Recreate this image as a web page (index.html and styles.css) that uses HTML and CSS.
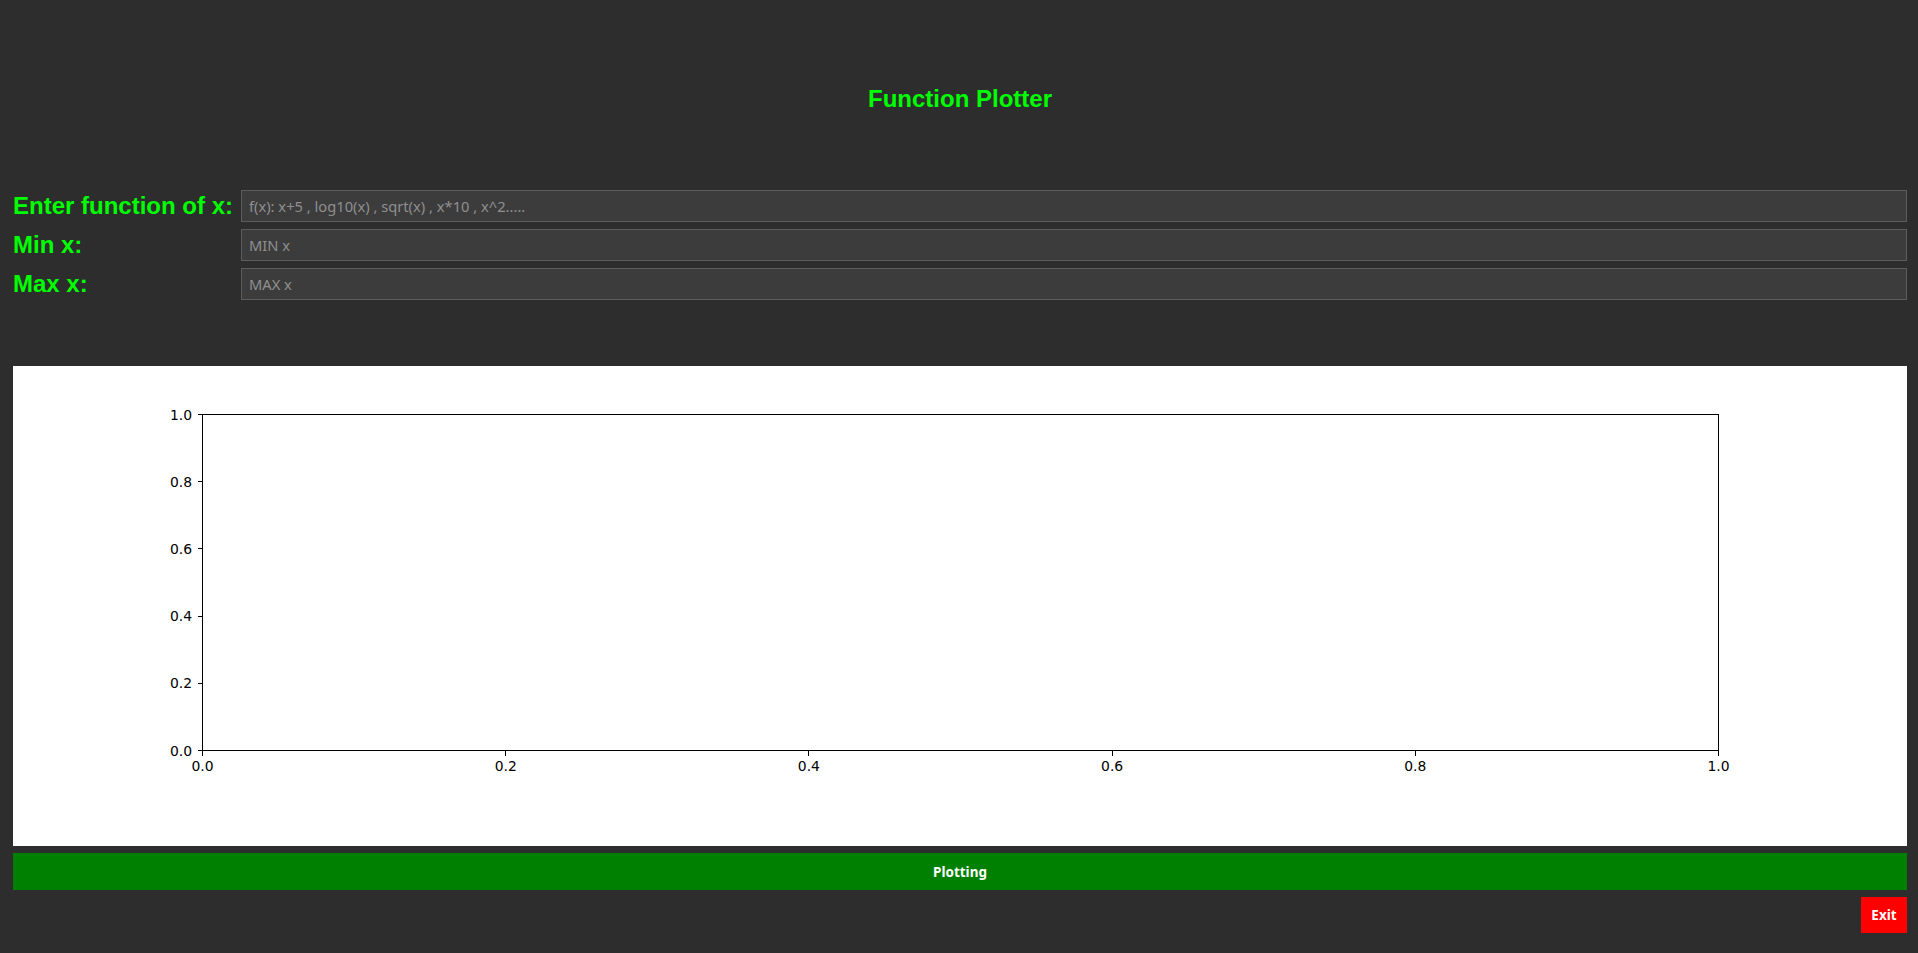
FILE: index.html
```html
<!DOCTYPE html>
<html>
<head>
<meta charset="utf-8">
<title>Function Plotter</title>
<link rel="stylesheet" href="styles.css">
</head>
<body>
<div class="app">
  <h1 class="title">Function Plotter</h1>
  <div class="form">
    <label class="label" for="fx">Enter function of x:</label>
    <input class="field" id="fx" type="text" placeholder="f(x): x+5 , log10(x) , sqrt(x) , x*10 , x^2.....">
    <label class="label" for="minx">Min x:</label>
    <input class="field" id="minx" type="text" placeholder="MIN x">
    <label class="label" for="maxx">Max x:</label>
    <input class="field" id="maxx" type="text" placeholder="MAX x">
  </div>
  <div class="plot">
    <svg class="chart" width="1894" height="480" viewBox="0 0 1894 480" xmlns="http://www.w3.org/2000/svg">
      <g class="lines" stroke="#000" stroke-width="1" fill="none" shape-rendering="crispEdges">
        <rect x="189.5" y="48.5" width="1516" height="336"/>
        <line x1="184.5" y1="48.5" x2="189.5" y2="48.5"/>
        <line x1="184.5" y1="115.5" x2="189.5" y2="115.5"/>
        <line x1="184.5" y1="182.5" x2="189.5" y2="182.5"/>
        <line x1="184.5" y1="250.5" x2="189.5" y2="250.5"/>
        <line x1="184.5" y1="317.5" x2="189.5" y2="317.5"/>
        <line x1="184.5" y1="384.5" x2="189.5" y2="384.5"/>
        <line x1="189.5" y1="384.5" x2="189.5" y2="389.5"/>
        <line x1="492.5" y1="384.5" x2="492.5" y2="389.5"/>
        <line x1="795.5" y1="384.5" x2="795.5" y2="389.5"/>
        <line x1="1099.5" y1="384.5" x2="1099.5" y2="389.5"/>
        <line x1="1402.5" y1="384.5" x2="1402.5" y2="389.5"/>
        <line x1="1705.5" y1="384.5" x2="1705.5" y2="389.5"/>
      </g>
      <g class="ylabels" text-anchor="end">
        <text x="179" y="53.5">1.0</text>
        <text x="179" y="120.7">0.8</text>
        <text x="179" y="187.9">0.6</text>
        <text x="179" y="255.1">0.4</text>
        <text x="179" y="322.3">0.2</text>
        <text x="179" y="389.5">0.0</text>
      </g>
      <g class="xlabels" text-anchor="middle">
        <text x="189.5" y="405">0.0</text>
        <text x="492.7" y="405">0.2</text>
        <text x="795.9" y="405">0.4</text>
        <text x="1099.1" y="405">0.6</text>
        <text x="1402.3" y="405">0.8</text>
        <text x="1705.5" y="405">1.0</text>
      </g>
    </svg>
  </div>
  <button class="plot-btn" type="button">Plotting</button>
  <button class="exit-btn" type="button">Exit</button>
</div>
</body>
</html>
```
FILE: styles.css
```css
html, body {
  margin: 0;
  padding: 0;
  background: #2d2d2d;
}

.app {
  display: flex;
  flex-direction: column;
  padding: 85px 11px 0 13px;
}

.title {
  margin: 0;
  height: 28px;
  line-height: 28px;
  text-align: center;
  font-family: "Liberation Sans", Arial, sans-serif;
  font-weight: bold;
  font-size: 24px;
  color: #00ff00;
}

.form {
  margin-top: 77px;
  display: grid;
  grid-template-columns: auto 1fr;
  column-gap: 8px;
  row-gap: 7px;
}

.label {
  display: flex;
  align-items: center;
  height: 32px;
  font-family: "Liberation Sans", Arial, sans-serif;
  font-weight: bold;
  font-size: 24px;
  color: #00ff00;
  white-space: nowrap;
}

.field {
  box-sizing: border-box;
  height: 32px;
  margin: 0;
  padding: 0 7px;
  background: #3c3c3c;
  border: 1px solid #5c5c5c;
  border-radius: 0;
  outline: none;
  color: #e0e0e0;
  font-family: "Noto Sans", "Open Sans", sans-serif;
  font-size: 14.7px;
}

.field::placeholder {
  color: #8f8f8f;
  opacity: 1;
}

.plot {
  margin-top: 66px;
  height: 480px;
  background: #ffffff;
  overflow: hidden;
}

.chart {
  display: block;
}

.chart text {
  font-family: "DejaVu Sans", sans-serif;
  font-size: 13.9px;
  fill: #000000;
}

.plot-btn {
  margin-top: 7px;
  height: 37px;
  border: none;
  background: #008000;
  color: #ffffff;
  font-family: "Noto Sans", "Open Sans", sans-serif;
  font-weight: bold;
  font-size: 13.5px;
  padding: 0;
}

.exit-btn {
  align-self: flex-end;
  margin-top: 7px;
  width: 46px;
  height: 36px;
  border: none;
  background: #ff0000;
  color: #ffffff;
  font-family: "Noto Sans", "Open Sans", sans-serif;
  font-weight: bold;
  font-size: 13.5px;
  padding: 0;
}
```
